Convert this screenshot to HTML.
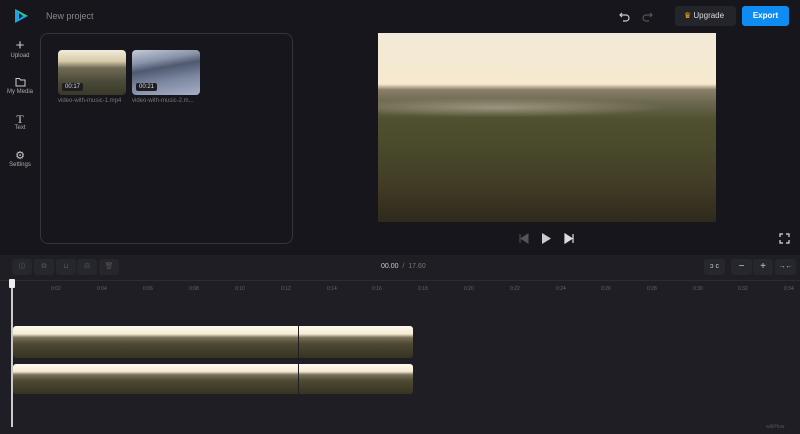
<!DOCTYPE html>
<html><head><meta charset="utf-8"><style>
*{margin:0;padding:0;box-sizing:border-box}
body{width:800px;height:434px;background:#17161c;font-family:"Liberation Sans",sans-serif;position:relative;overflow:hidden;color:#ccc}
.a{position:absolute}
.side{font-size:6px;color:#aaa;text-align:center;width:40px}
.frame{position:absolute;top:0;height:100%;width:57.3px;background:linear-gradient(180deg,#fffaf0 0%,#f5ead2 25%,#7a705a 36%,#4e4a34 55%,#433f2c 75%,#37331f 100%)}
.tick{position:absolute;top:286px;font-size:5px;color:#666}
.btn{position:absolute;background:#26262d;border-radius:3px;font-size:7px;color:#555;text-align:center;line-height:16px}
</style></head><body>
<svg class="a" style="left:13px;top:8px" width="16" height="16" viewBox="0 0 16 16"><path d="M2 1 L15 8 L2 15 Z" fill="#1aa3e6"/><path d="M2 1 L15 8 L8 8 Z" fill="#27c4a0"/><path d="M6 5 L10 8 L6 11Z" fill="#17161c"/></svg>
<div class="a" style="left:46px;top:11px;font-size:9px;color:#888">New project</div>
<svg class="a" style="left:619px;top:10px" width="34" height="12" viewBox="0 0 34 12"><path d="M3 3 L1 5 L3 7 M1 5 H7 a3 3 0 0 1 0 6 H4" stroke="#ccc" fill="none" stroke-width="1.2"/><path d="M31 3 L33 5 L31 7 M33 5 H27 a3 3 0 0 0 0 6 H30" stroke="#555" fill="none" stroke-width="1.2"/></svg>
<div class="a" style="left:675px;top:6px;width:61px;height:20px;background:#24242b;border-radius:3px;font-size:8px;color:#ddd;line-height:20px;padding-left:9px"><span style="color:#f2b705">♛</span> Upgrade</div>
<div class="a" style="left:742px;top:6px;width:47px;height:20px;background:#0f8cf2;border-radius:3px;font-size:8px;color:#fff;line-height:20px;text-align:center;font-weight:bold">Export</div>
<div class="a side" style="left:0;top:39px"><div style="font-size:15px;line-height:14px;color:#ccc">+</div>Upload</div>
<div class="a side" style="left:0;top:77px"><svg width="11" height="10" viewBox="0 0 11 10"><path d="M1 1.5h3.5l1 1.5H10v6H1z" stroke="#ccc" fill="none"/></svg><br>My Media</div>
<div class="a side" style="left:0;top:113px"><div style="font-size:12px;line-height:12px;color:#ccc;font-family:'Liberation Serif',serif">T</div>Text</div>
<div class="a side" style="left:0;top:150px"><div style="font-size:11px;line-height:12px;color:#ccc">⚙</div>Settings</div>
<div class="a" style="left:40px;top:33px;width:253px;height:211px;border:1px solid #34343b;border-radius:8px"></div>
<div class="a" style="left:58px;top:50px;width:68px;height:45px;border-radius:4px;background:linear-gradient(180deg,#f1ecdb 0%,#d6c9a8 25%,#6e6a55 40%,#4c4a38 70%,#3a3829 100%)"></div>
<div class="a" style="left:62px;top:83px;font-size:6px;background:#1e1e22;color:#ddd;padding:1px 3px;border-radius:2px">00:17</div>
<div class="a" style="left:132px;top:50px;width:68px;height:45px;border-radius:4px;background:linear-gradient(170deg,#c4cad6 0%,#8a94aa 25%,#4f5a70 40%,#7b86a0 65%,#a8b0c6 100%)"></div>
<div class="a" style="left:136px;top:83px;font-size:6px;background:#1e1e22;color:#ddd;padding:1px 3px;border-radius:2px">00:21</div>
<div class="a" style="left:58px;top:98px;font-size:6px;color:#777">video-with-music-1.mp4</div>
<div class="a" style="left:132px;top:98px;font-size:6px;color:#777">video-with-music-2.m...</div>
<div class="a" style="left:378px;top:33px;width:338px;height:189px;background:linear-gradient(180deg,#f2ead8 0%,#f6e9cf 27%,#8a806a 30%,#6e6a52 36%,#4f5030 46%,#4a4a2c 60%,#423c26 80%,#2e2a1c 100%)"></div>
<div class="a" style="left:378px;top:95px;width:338px;height:25px;background:radial-gradient(ellipse at 35% 50%,rgba(220,210,190,.45),rgba(0,0,0,0) 55%)"></div>
<svg class="a" style="left:517px;top:231px" width="60" height="15" viewBox="0 0 60 15"><path d="M3 3v9M11 3L4 7.5 11 12z" fill="#555" stroke="#555"/><path d="M25 2L34 7.5 25 13z" fill="#ccc"/><path d="M48 3L55 7.5 48 12zM56 3v9" fill="#ddd" stroke="#ddd" stroke-width="1.2"/></svg>
<svg class="a" style="left:779px;top:233px" width="11" height="11" viewBox="0 0 11 11"><path d="M1 4V1h3M7 1h3v3M10 7v3H7M4 10H1V7" stroke="#ddd" fill="none" stroke-width="1.2"/></svg>
<div class="a" style="left:0;top:255px;width:800px;height:179px;background:#1e1e24"></div>
<div class="btn" style="left:12px;top:259px;width:20px;height:16px">⟨|⟩</div>
<div class="btn" style="left:34px;top:259px;width:20px;height:16px">⧉</div>
<div class="btn" style="left:56px;top:259px;width:20px;height:16px">⊔</div>
<div class="btn" style="left:77px;top:259px;width:20px;height:16px">⊟</div>
<div class="btn" style="left:99px;top:259px;width:20px;height:16px">🗑</div>
<div class="a" style="left:381px;top:263px;font-size:7px;color:#ccc">00.00 <span style="color:#777">&nbsp;/&nbsp; 17.60</span></div>
<div class="btn" style="left:704px;top:259px;width:21px;height:16px;color:#ccc">ɔ c</div>
<div class="btn" style="left:731px;top:259px;width:21px;height:16px;color:#ccc;font-size:10px;line-height:15px">−</div>
<div class="btn" style="left:753px;top:259px;width:20px;height:16px;color:#ccc;font-size:10px;line-height:15px">+</div>
<div class="btn" style="left:775px;top:259px;width:21px;height:16px;color:#ccc">→←</div>
<div class="a" style="left:0;top:280px;width:800px;height:1px;background:#2c2c33"></div>
<div class="a" style="left:13px;top:326px;width:400px;height:32px;border-radius:3px;overflow:hidden">
<div class="frame" style="left:0"></div><div class="frame" style="left:57px"></div><div class="frame" style="left:114px"></div><div class="frame" style="left:171px"></div><div class="frame" style="left:228px"></div><div class="frame" style="left:286px"></div><div class="frame" style="left:343px"></div></div>
<div class="a" style="left:13px;top:364px;width:400px;height:30px;border-radius:3px;overflow:hidden">
<div class="frame" style="left:0"></div><div class="frame" style="left:57px"></div><div class="frame" style="left:114px"></div><div class="frame" style="left:171px"></div><div class="frame" style="left:228px"></div><div class="frame" style="left:286px"></div><div class="frame" style="left:343px"></div></div>
<div class="a" style="left:11px;top:282px;width:2px;height:145px;background:#ccc"></div>
<div class="a" style="left:9px;top:279px;width:6px;height:9px;background:#eee;border-radius:1px"></div>
<div class="tick" style="left:51px">0:02</div><div class="tick" style="left:97px">0:04</div><div class="tick" style="left:143px">0:06</div><div class="tick" style="left:189px">0:08</div><div class="tick" style="left:235px">0:10</div><div class="tick" style="left:281px">0:12</div><div class="tick" style="left:327px">0:14</div><div class="tick" style="left:372px">0:16</div><div class="tick" style="left:418px">0:18</div><div class="tick" style="left:464px">0:20</div><div class="tick" style="left:510px">0:22</div><div class="tick" style="left:556px">0:24</div><div class="tick" style="left:601px">0:26</div><div class="tick" style="left:647px">0:28</div><div class="tick" style="left:693px">0:30</div><div class="tick" style="left:738px">0:32</div><div class="tick" style="left:784px">0:34</div>
<div class="a" style="left:766px;top:424px;font-size:5px;color:#555">wikiHow</div>
</body></html>
